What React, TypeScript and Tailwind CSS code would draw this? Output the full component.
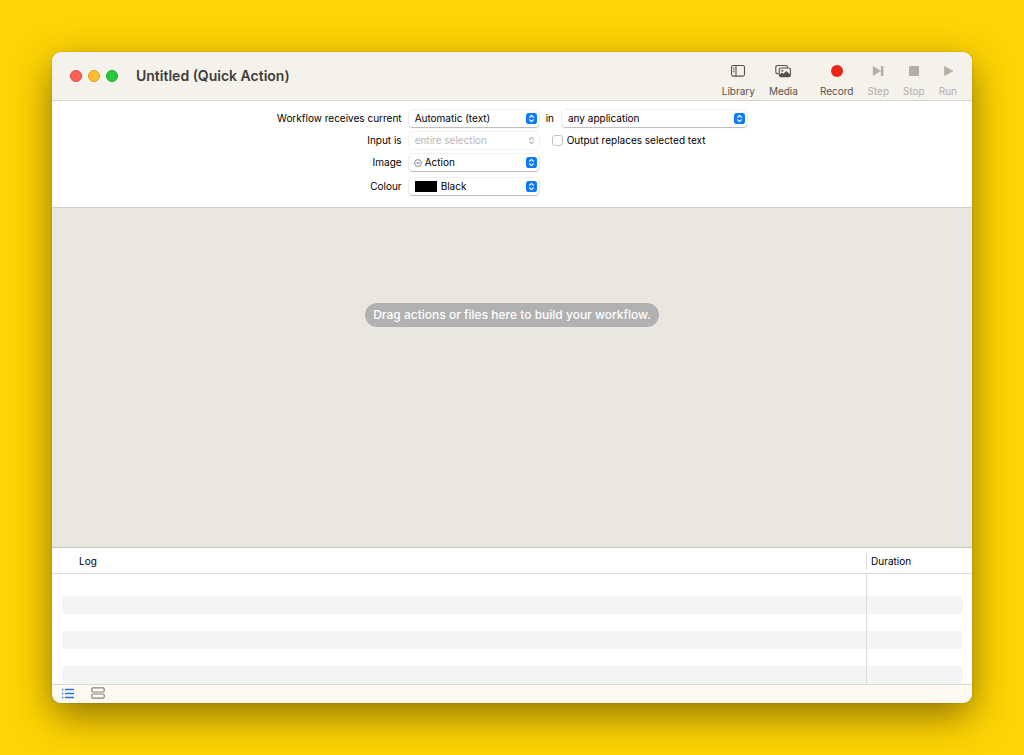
import React from 'react';
import { clsx } from 'clsx';

interface ToolbarItem {
  label: string;
  icon: React.ReactNode;
  disabled?: boolean;
  spaced?: boolean;
}

const LibraryIcon = () => (
  <svg width="16" height="14" viewBox="0 0 16 14" fill="none" stroke="#55534f" strokeWidth="1.1">
    <rect x="1.5" y="1.5" width="13" height="10.6" rx="1.8" />
    <path d="M6 1.5v10.6" />
    <path d="M3 4h1.5M3 5.9h1.5M3 7.8h1.5" strokeWidth="1" />
  </svg>
);

const MediaIcon = () => (
  <svg width="16" height="14" viewBox="0 0 16 14" fill="none" stroke="#55534f" strokeWidth="1.1">
    <path d="M3.4 9.6h-.9A1.7 1.7 0 0 1 .8 7.9V3.2a1.7 1.7 0 0 1 1.7-1.7h8.2a1.7 1.7 0 0 1 1.7 1.7v.5" />
    <rect x="4.2" y="4" width="11.2" height="8.6" rx="1.7" />
    <circle cx="7.3" cy="6.8" r="1" fill="#55534f" stroke="none" />
    <path d="M4.4 10.4l2.5-1.6 1.6 1 2.8-2.8 3.9 3.4v.8a1.4 1.4 0 0 1-1.4 1.3H5.8a1.4 1.4 0 0 1-1.4-1.3z" fill="#55534f" stroke="none" />
  </svg>
);

const toolbar: ToolbarItem[] = [
  { label: 'Library', icon: <LibraryIcon /> },
  { label: 'Media', icon: <MediaIcon /> },
  {
    label: 'Record',
    spaced: true,
    icon: <svg width="14" height="14" viewBox="0 0 14 14"><circle cx="7" cy="7" r="6" fill="#eb2419" /></svg>,
  },
  {
    label: 'Step',
    disabled: true,
    icon: (
      <svg width="14" height="14" viewBox="0 0 14 14" fill="#b1afab">
        <path d="M2.2 2.6 9.6 7l-7.4 4.4z" stroke="#b1afab" strokeWidth="0.6" strokeLinejoin="round" />
        <rect x="9.9" y="2" width="2.5" height="10" rx="0.5" />
      </svg>
    ),
  },
  {
    label: 'Stop',
    disabled: true,
    icon: <svg width="14" height="14" viewBox="0 0 14 14"><rect x="2" y="2" width="10" height="10" rx="0.8" fill="#b1afab" /></svg>,
  },
  {
    label: 'Run',
    disabled: true,
    icon: <svg width="14" height="14" viewBox="0 0 14 14"><path d="M3.4 2.3 12 7l-8.6 4.7z" fill="#b1afab" stroke="#b1afab" strokeWidth="0.6" strokeLinejoin="round" /></svg>,
  },
];

const Stepper = ({ disabled }: { disabled?: boolean }) => (
  <svg
    width="11"
    height="11"
    viewBox="0 0 11 11"
    className="pointer-events-none absolute top-[3px] right-[2px]"
    fill="none"
    stroke={disabled ? '#b5b5b5' : '#ffffff'}
    strokeWidth="1.2"
    strokeLinecap="round"
    strokeLinejoin="round"
  >
    {!disabled && <rect width="11" height="11" rx="2.8" fill="#0a7aff" stroke="none" />}
    <path d="M3.6 4.2 5.5 2.4l1.9 1.8M3.6 6.8l1.9 1.8 1.9-1.8" />
  </svg>
);

interface PopUpProps {
  id: string;
  value: string;
  disabled?: boolean;
  adornment?: React.ReactNode;
  padding?: string;
  className?: string;
}

const PopUp: React.FC<PopUpProps> = ({ id, value, disabled, adornment, padding = 'pl-[6px]', className }) => (
  <div className={clsx('relative h-[17px]', className)}>
    <select
      id={id}
      disabled={disabled}
      className={clsx(
        'block h-[17px] w-full appearance-none rounded-[4px] bg-white pr-4 text-[10px] leading-[17px]',
        padding,
        disabled
          ? 'text-[#b8b8b8] shadow-[0_0_0_1px_rgba(0,0,0,0.05)] disabled:opacity-100'
          : 'text-black shadow-[0_0_0_1px_rgba(0,0,0,0.06),0_1px_1px_rgba(0,0,0,0.22)]',
      )}
    >
      <option>{value}</option>
    </select>
    {adornment}
    <Stepper disabled={disabled} />
  </div>
);

const logRows = [0, 1, 2];

const App: React.FC = () => {
  return (
    <div className="flex min-h-screen flex-col bg-[#ffd404] p-[52px] font-['Inter','Liberation_Sans',sans-serif] text-black">
      <main className="flex flex-1 flex-col overflow-hidden rounded-[9px] bg-white shadow-[0_0_1px_rgba(0,0,0,0.5),0_13px_38px_rgba(0,0,0,0.45)]">
        {/* Title bar */}
        <header className="flex h-[49px] items-center border-b border-[#d5d3ce] bg-[#f5f2eb] pr-[15px] pl-[18px]">
          <div className="flex gap-[6px]">
            <button aria-label="Close" className="size-3 rounded-full border border-[#e2463f] bg-[#ff5f57]" />
            <button aria-label="Minimise" className="size-3 rounded-full border border-[#dfa023] bg-[#febc2e]" />
            <button aria-label="Zoom" className="size-3 rounded-full border border-[#1dac2b] bg-[#28c840]" />
          </div>
          <h1 className="ml-[18px] text-[14px] leading-4 font-semibold text-[#3d3c3a]">Untitled (Quick Action)</h1>
          <div className="ml-auto flex gap-[14px]">
            {toolbar.map((item) => (
              <button
                key={item.label}
                disabled={item.disabled}
                className={clsx(
                  'flex flex-col items-center gap-[7px] pt-[9px] text-[10px] leading-3',
                  item.disabled ? 'text-[#b1afab]' : 'text-[#55534f]',
                  item.spaced && 'ml-2',
                )}
              >
                {item.icon}
                {item.label}
              </button>
            ))}
          </div>
        </header>

        {/* Workflow settings */}
        <form className="flex justify-center border-b border-[#d0cfcc] pt-[9px] pb-3 text-[10px] leading-[17px]">
          <div className="grid grid-cols-[auto_130px_auto] gap-x-[7px] gap-y-[5px]">
            <label htmlFor="receives" className="text-right">Workflow receives current</label>
            <PopUp id="receives" value="Automatic (text)" />
            <div className="flex gap-2">
              <label htmlFor="application">in</label>
              <PopUp id="application" value="any application" className="w-[185px]" />
            </div>

            <label htmlFor="input" className="text-right">Input is</label>
            <PopUp id="input" value="entire selection" disabled />
            <label className="flex items-center gap-1 pl-[6px]">
              <input type="checkbox" className="size-[11px] appearance-none rounded-[3px] border border-[#c4c4c4] bg-white" />
              Output replaces selected text
            </label>

            <label htmlFor="image" className="text-right">Image</label>
            <PopUp
              id="image"
              value="Action"
              padding="pl-4"
              adornment={
                <svg width="8" height="8" viewBox="0 0 8 8" fill="none" stroke="#6b6b6b" strokeWidth="0.8" className="pointer-events-none absolute top-[5px] left-[5px]">
                  <circle cx="4" cy="4" r="3.4" />
                  <path d="M2.4 4h3.2" strokeWidth="1.1" />
                </svg>
              }
            />
            <span />

            <label htmlFor="colour" className="pt-[2px] text-right">Colour</label>
            <div className="pt-[2px]">
              <PopUp
                id="colour"
                value="Black"
                padding="pl-8"
                adornment={<span className="pointer-events-none absolute top-[3px] left-[6px] h-[11px] w-[22px] bg-black" />}
              />
            </div>
          </div>
        </form>

        {/* Workflow canvas */}
        <section className="flex flex-1 items-start justify-center border-b border-[#c9c6bf] bg-[#eae7e0] pt-[95px]">
          <p className="rounded-full bg-[#b1b1b1] px-2 text-[12px] leading-6 font-medium text-white">
            Drag actions or files here to build your workflow.
          </p>
        </section>

        {/* Log */}
        <table className="w-full table-fixed border-separate border-spacing-0 text-[10px]">
          <colgroup>
            <col />
            <col className="w-[106px]" />
          </colgroup>
          <thead>
            <tr className="h-[26px]">
              <th className="border-b border-[#dcdcdc] p-0 pl-[27px] text-left leading-4 font-normal">Log</th>
              <th className="border-b border-[#dcdcdc] p-0 text-left font-normal">
                <div className="border-l border-[#dcdcdc] pl-1 leading-4">Duration</div>
              </th>
            </tr>
          </thead>
          <tbody>
            {logRows.map((row) => (
              <React.Fragment key={row}>
                <tr className={row === 0 ? 'h-[22px]' : 'h-[17px]'}>
                  <td className="p-0" />
                  <td className="border-l border-[#dcdcdc] p-0" />
                </tr>
                <tr className="h-[18px]">
                  <td className="p-0">
                    <div className="ml-[10px] h-[18px] rounded-l-[5px] bg-[#f3f4f4]" />
                  </td>
                  <td className="border-l border-[#dcdcdc] p-0">
                    <div className="mr-[9px] h-[18px] rounded-r-[5px] bg-[#f3f4f4]" />
                  </td>
                </tr>
              </React.Fragment>
            ))}
          </tbody>
        </table>

        {/* Status bar */}
        <footer className="flex h-[19px] items-center gap-4 border-t border-[#dbd9d4] bg-[#fefaf3] pb-[2px] pl-[9px]">
          <button aria-label="Show log">
            <svg width="14" height="12" viewBox="0 0 14 12" fill="none" stroke="#2472e8" strokeWidth="1.3">
              <path d="M1 2.5h1.3M1 6.5h1.3M1 10.5h1.3M4 2.5h9M4 6.5h9M4 10.5h9" />
            </svg>
          </button>
          <button aria-label="Show variables">
            <svg width="14" height="12" viewBox="0 0 14 12" fill="none" stroke="#85827c" strokeWidth="1.2">
              <rect x="0.8" y="0.8" width="12.4" height="4.2" rx="1.2" />
              <rect x="0.8" y="7" width="12.4" height="4.2" rx="1.2" />
            </svg>
          </button>
        </footer>
      </main>
    </div>
  );
};

export default App;
